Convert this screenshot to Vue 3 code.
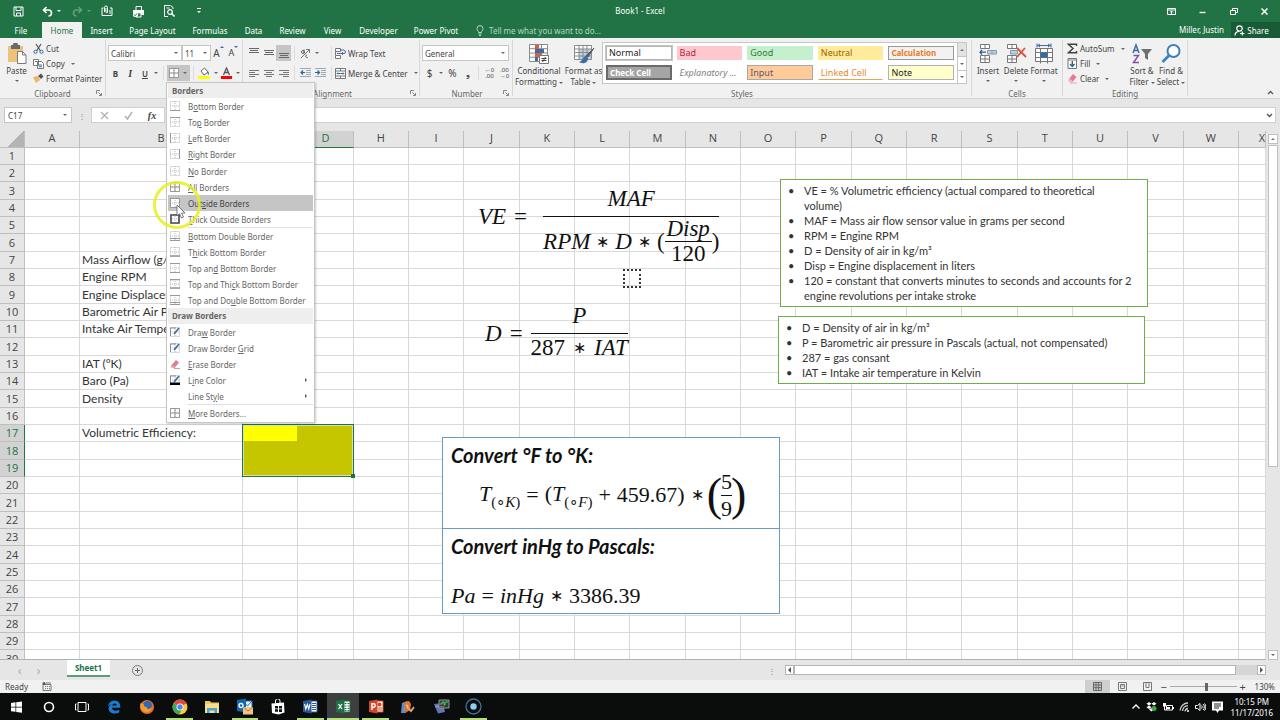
<template>
  <div class="screen">
    <header class="titlebar">
      <div class="quick">
        <button aria-label="Save">
          <svg width="11" height="11" viewBox="0 0 11 11"><path d="M1 1h9v9H1zM3 1v3.500h5V1M3.500 10V7h4v3" fill="none" stroke="#fff" /></svg>
        </button>
        <button aria-label="Undo">
          <svg width="11" height="11" viewBox="0 0 11 11"><path d="M1.500 4h5a3 3 0 0 1 0 6M4.500 1l-3 3 3 3" fill="none" stroke="#fff" stroke-width="1.600" /></svg>
          <i class="caret light"></i>
        </button>
        <button aria-label="Redo" class="faded">
          <svg width="11" height="11" viewBox="0 0 11 11"><path d="M9.500 4h-5a3 3 0 0 0 0 6M6.500 1l3 3-3 3" fill="none" stroke="#fff" stroke-width="1.600" /></svg>
          <i class="caret light"></i>
        </button>
        <button aria-label="Attach">
          <svg width="12" height="12" viewBox="0 0 12 12"><path d="M1 3v7.500h10V3H9M1 3h1.500M3.500 7V2.500a1.500 1.500 0 0 1 3 0V7a.8.8 0 0 1-1.600 0V3M8 6h2M8 8h2" fill="none" stroke="#fff" /></svg>
        </button>
        <button aria-label="Quick Print">
          <svg width="13" height="13" viewBox="0 0 13 13"><path d="M1 5h11v5H1z" fill="#fff" /><path d="M4 5V1.500h5.500V5M4 8h5v4H4z" fill="#217346" stroke="#fff" /><circle cx="3.500" cy="9.500" r="2.600" fill="#fff" /><path d="M2 9.500l1.200 1.200L5 8.500" stroke="#217346" fill="none" /></svg>
        </button>
        <button aria-label="Print Preview">
          <svg width="12" height="12" viewBox="0 0 12 12"><path d="M5 11.500H1.500V.5h6l2.500 2V4M3.500 3h3" fill="none" stroke="#fff" /><circle cx="7" cy="7" r="2.300" fill="none" stroke="#fff" stroke-width="1.200" /><path d="M8.500 8.500l3 3" stroke="#fff" stroke-width="1.600" /></svg>
        </button>
        <button aria-label="Customize Quick Access Toolbar">
          <svg width="6" height="6" viewBox="0 0 6 6"><path d="M1 .5h4" stroke="#fff" /><path d="M1 3h4L3 5z" fill="#fff" /></svg>
        </button>
      </div>
      <h1>Book1 - Excel</h1>
      <div class="window">
        <button aria-label="Ribbon Display Options">
          <svg width="9" height="7" viewBox="0 0 9 7"><path d="M.5.5h8v6h-8zM.5 2h8M4.500 6V3M3 4.500L4.500 3 6 4.500" fill="none" stroke="#fff" /></svg>
        </button>
        <button aria-label="Minimize">
          <svg width="7" height="7" viewBox="0 0 7 7"><path d="M.5 4.500h6" stroke="#fff" stroke-width="1.400" /></svg>
        </button>
        <button aria-label="Restore">
          <svg width="8" height="7" viewBox="0 0 8 7"><path d="M.5 2.500h5v4h-5zM2.500 2.500v-2h5v4h-2" fill="none" stroke="#fff" /></svg>
        </button>
        <button aria-label="Close">
          <svg width="7" height="7" viewBox="0 0 7 7"><path d="M.5.5l6 6M6.500.5l-6 6" stroke="#fff" stroke-width="1.500" /></svg>
        </button>
      </div>
    </header>

    <nav class="tabs">
      <div class="tab-list">
        <button v-for="tab in tabs" :key="tab" :class="{ active: tab === activeTab }" @click="activeTab = tab">{{ tab }}</button>
      </div>
      <label class="tell">
        <svg width="8" height="11" viewBox="0 0 8 11"><path d="M2.500 7.500C2.500 6 1 5.500 1 3.600a3 3 0 0 1 6 0C7 5.500 5.500 6 5.500 7.500zM2.500 9h3M3 10.500h2" fill="none" stroke="#b5d3c2" /></svg>
        <input type="text" placeholder="Tell me what you want to do..." />
      </label>
      <span class="user">Miller, Justin</span>
      <button class="share">
        <svg width="11" height="11" viewBox="0 0 11 11"><circle cx="5.500" cy="3.500" r="2.700" fill="none" stroke="#fff" stroke-width="1.200" /><path d="M1 10.500c0-2.500 1.800-4 4-4M6 8.500h4.500M8.300 6.500v4" fill="none" stroke="#fff" stroke-width="1.200" /></svg>
        Share
      </button>
    </nav>

    <section class="ribbon">
      <div class="group clipboard">
        <div class="body">
          <button class="big">
            <svg width="22" height="22" viewBox="0 0 22 22"><path d="M2 3h15v16H2z" fill="#ecc37a" /><path d="M5 2h2a2.500 2.500 0 0 1 5 0h2v4H5z" fill="#6a6a6a" /><path d="M11.500 8.500h5l3.500 3.500v8.500h-8.500z" fill="#fff" stroke="#7a7a7a" /><path d="M16.500 8.500V12H20" fill="none" stroke="#7a7a7a" /></svg>
            <span>Paste</span>
            <i class="caret"></i>
          </button>
          <div class="stack">
            <button>
              <svg width="11" height="11" viewBox="0 0 11 11"><path d="M3 1l4.500 7M8 1L3.500 8" stroke="#555" stroke-width="1.200" /><circle cx="2.500" cy="8.800" r="1.600" fill="none" stroke="#3b6ea5" /><circle cx="8.500" cy="8.800" r="1.600" fill="none" stroke="#3b6ea5" /></svg>
              Cut
            </button>
            <button>
              <svg width="11" height="11" viewBox="0 0 11 11"><path d="M.5 1.500h5v6h-5zM4.500 3.500h4l2 2v5h-6z" fill="#fff" stroke="#777" /><path d="M6 7h3M6 8.700h3M2 3.500h2" stroke="#3b6ea5" /></svg>
              Copy <i class="caret"></i>
            </button>
            <button>
              <svg width="11" height="11" viewBox="0 0 11 11"><path d="M0 4l5-1 2 4-4 3z" fill="#ecb763" /><path d="M5 3l3-2.500 2.500 3L8 6z" fill="#555" /></svg>
              Format Painter
            </button>
          </div>
        </div>
        <footer>Clipboard<LaunchIcon /></footer>
      </div>

      <div class="group font">
        <div class="body rows">
          <div class="row">
            <span class="combo name-combo"><select aria-label="Font"><option>Calibri</option></select><i class="caret"></i></span>
            <span class="combo size-combo"><select aria-label="Font Size"><option>11</option></select><i class="caret"></i></span>
            <button class="tool letter" aria-label="Increase Font Size">A<svg width="4" height="4" viewBox="0 0 4 4"><path d="M0 3l2-2 2 2z" fill="#3b6ea5" /></svg></button>
            <button class="tool letter small" aria-label="Decrease Font Size">A<svg width="4" height="4" viewBox="0 0 4 4"><path d="M0 1l2 2 2-2z" fill="#3b6ea5" /></svg></button>
          </div>
          <div class="row">
            <button class="tool bold">B</button>
            <button class="tool italic">I</button>
            <button class="tool under">U</button>
            <button class="tool narrow" aria-label="Underline options"><i class="caret"></i></button>
            <i class="rule"></i>
            <button class="tool split pressed" aria-label="Borders">
              <BorderIcon kind="all" /><i class="caret"></i>
            </button>
            <i class="rule"></i>
            <button class="tool split" aria-label="Fill Color">
              <svg width="12" height="12" viewBox="0 0 12 12"><path d="M3 4l3.500-3L10 5 6 8z" fill="#fff" stroke="#666" /><path d="M9.500 4c2 1 1.500 3 1 4-1-1-1-2-1-4z" fill="#3b6ea5" /><path d="M0 9h12v3H0z" fill="#ff0" /></svg>
              <i class="caret"></i>
            </button>
            <button class="tool split" aria-label="Font Color">
              <svg width="11" height="12" viewBox="0 0 11 12"><path d="M2.500 8l3-7 3 7M3.500 5.500h4" fill="none" stroke="#555" stroke-width="1.300" /><path d="M0 9h11v3H0z" fill="#f00" /></svg>
              <i class="caret"></i>
            </button>
          </div>
        </div>
        <footer>Font<LaunchIcon /></footer>
      </div>

      <div class="group align">
        <div class="body rows">
          <div class="row">
            <button v-for="n in 3" :key="n" class="tool" :class="{ pressed: n === 3 }" :aria-label="vertical[n - 1]">
              <svg width="10" height="12" viewBox="0 0 10 12"><path :d="verticalLines(n)" stroke="#666" /></svg>
            </button>
            <i class="rule"></i>
            <button class="tool split" aria-label="Orientation">
              <svg width="11" height="11" viewBox="0 0 11 11"><path d="M1 10l8-8M6 1.500h3.500V5" fill="none" stroke="#777" /><circle cx="3" cy="4" r="1.500" fill="none" stroke="#666" /><path d="M4 1.500v4M7 7a1.300 1.300 0 1 0 1 2" fill="none" stroke="#666" /></svg>
              <i class="caret"></i>
            </button>
            <i class="rule wide"></i>
            <button class="text-tool">
              <svg width="11" height="11" viewBox="0 0 11 11"><path d="M.5.5h5v3h-5zM.5 7.500h5v3h-5zM.5 3.500v4" fill="#fff" stroke="#777" /><path d="M5 2h4M2 5.500h7a1 1 0 0 0 0-3M8 4L6.500 5.500 8 7" fill="none" stroke="#3b6ea5" /></svg>
              Wrap Text
            </button>
          </div>
          <div class="row">
            <button v-for="n in 3" :key="n" class="tool" :aria-label="horizontal[n - 1]">
              <svg width="10" height="9" viewBox="0 0 10 9"><path :d="horizontalLines(n)" stroke="#777" /></svg>
            </button>
            <i class="rule"></i>
            <button class="tool" aria-label="Decrease Indent">
              <svg width="11" height="10" viewBox="0 0 11 10"><path d="M0 .5h11M6 2.500h5M6 4.500h5M6 6.500h5M0 8.500h11" stroke="#9aa9b8" /><path d="M5 4.500H1M3 2.500l-2 2 2 2" fill="none" stroke="#2a6399" stroke-width="1.200" /></svg>
            </button>
            <button class="tool" aria-label="Increase Indent">
              <svg width="11" height="10" viewBox="0 0 11 10"><path d="M0 .5h11M6 2.500h5M6 4.500h5M6 6.500h5M0 8.500h11" stroke="#9aa9b8" /><path d="M0 4.500h4M2.500 2.500l2 2-2 2" fill="none" stroke="#2a6399" stroke-width="1.200" /></svg>
            </button>
            <i class="rule"></i>
            <button class="text-tool">
              <svg width="11" height="11" viewBox="0 0 11 11"><path d="M.5.5h10v10H.5zM.5 3h10M.5 8h10M5.500.5V3M5.500 8v2.500" fill="#fff" stroke="#777" /><path d="M2 5.500h7M3 4.500l-1 1 1 1M8 4.500l1 1-1 1" fill="none" stroke="#3b6ea5" /></svg>
              Merge &amp; Center <i class="caret"></i>
            </button>
          </div>
        </div>
        <footer>Alignment<LaunchIcon /></footer>
      </div>

      <div class="group number">
        <div class="body rows">
          <div class="row">
            <span class="combo format-combo"><select aria-label="Number Format"><option>General</option></select><i class="caret"></i></span>
          </div>
          <div class="row">
            <button class="tool sign">$</button>
            <button class="tool narrow" aria-label="Currency options"><i class="caret"></i></button>
            <button class="tool sign">%</button>
            <button class="tool sign">❟</button>
            <i class="rule"></i>
            <button class="tool decimals" aria-label="Increase Decimal"><span>←0<br />.00</span></button>
            <button class="tool decimals" aria-label="Decrease Decimal"><span>.00<br />→0</span></button>
          </div>
        </div>
        <footer>Number<LaunchIcon /></footer>
      </div>

      <div class="group styles">
        <div class="body">
          <button class="big cond">
            <svg width="22" height="22" viewBox="0 0 22 22"><path d="M1.500 1.500h18v17h-18z" fill="#fff" stroke="#8a8a8a" /><path d="M1.500 5.700h18M1.500 10h18M1.500 14.200h18M7.500 1.500v17M13.500 1.500v17" stroke="#8a8a8a" /><path d="M7 2h4v4H7zM7 10h7v4H7z" fill="#d65f45" /><path d="M7 6h9v4H7zM7 14h3v4H7z" fill="#3b6ea5" /><path d="M11.500 12.500h9v8h-9z" fill="#fff" stroke="#777" /><path d="M13.500 15.500h5M13.500 17.500h5M17.500 14l-3 5" stroke="#444" /></svg>
            <span>Conditional<br />Formatting <i class="caret"></i></span>
          </button>
          <button class="big table">
            <svg width="22" height="22" viewBox="0 0 22 22"><path d="M1.500 2.500h17v14h-17z" fill="#fff" stroke="#8a8a8a" /><path d="M6 6h12v10H6z" fill="#b9d3ea" /><path d="M1.500 6h17M1.500 9.500h17M1.500 13h17M6 2.500v14M10 2.500v14M14 2.500v14" stroke="#8a8a8a" /><path d="M21 5l-6 9-2-1z" fill="#5a5a5a" stroke="#5a5a5a" /><path d="M13 13c-3 0-3 5-7 6 3 2 9 2 9-4z" fill="#3b6ea5" /></svg>
            <span>Format as<br />Table <i class="caret"></i></span>
          </button>
          <div class="gallery">
            <button v-for="s in cellStyles" :key="s.name" :class="s.kind">{{ s.name }}</button>
          </div>
          <div class="gallery-nav">
            <button aria-label="Previous styles" disabled><i class="caret up"></i></button>
            <button aria-label="Next styles"><i class="caret"></i></button>
            <button aria-label="More styles"><i class="caret more"></i></button>
          </div>
        </div>
        <footer>Styles</footer>
      </div>

      <div class="group cells">
        <div class="body">
          <button class="big">
            <svg width="20" height="22" viewBox="0 0 20 22"><path d="M2.500 1.500h9v4h-9zM7 1.500v4M2.500 12.500h9v7h-9zM7 12.500v7M2.500 16h9" fill="#fff" stroke="#777" /><path d="M9.500 7.500h9v3.500h-9zM14 7.500V11" fill="#b9cfe6" stroke="#8899aa" /><path d="M8 9.200H2M4 7L2 9.200l2 2.300" fill="none" stroke="#2a6399" stroke-width="1.300" /></svg>
            <span>Insert</span><i class="caret"></i>
          </button>
          <button class="big">
            <svg width="22" height="22" viewBox="0 0 22 22"><path d="M2.500 1.500h9v4h-9zM7 1.500v4M2.500 12.500h9v7h-9zM7 12.500v7M2.500 16h9" fill="#fff" stroke="#777" /><path d="M5.500 7.500h7v3.500h-7z" fill="#b9cfe6" stroke="#8899aa" /><path d="M12 5l9 9M20 5l-8 9" stroke="#d4553a" stroke-width="1.800" /></svg>
            <span>Delete</span><i class="caret"></i>
          </button>
          <button class="big">
            <svg width="20" height="22" viewBox="0 0 20 22"><path d="M1.500 5.500h17v13h-17zM1.500 9.500h17M1.500 14.500h17M6.500 5.500v15M13.500 5.500v15" fill="#fff" stroke="#777" /><path d="M6.500 9.500h7v5h-7z" fill="#2f6ca8" /><path d="M3 2.500h14M3 .5v4M17 .5v4M6 1L4 2.500 6 4M14 1l2 1.500L14 4" fill="none" stroke="#3b6ea5" /></svg>
            <span>Format</span><i class="caret"></i>
          </button>
        </div>
        <footer>Cells</footer>
      </div>

      <div class="group editing">
        <div class="body">
          <div class="stack">
            <button>
              <svg width="11" height="11" viewBox="0 0 11 11"><path d="M9.500 3V1.300H1.500L6 5.500 1.500 9.700h8V8" fill="none" stroke="#444" stroke-width="1.500" /></svg>
              AutoSum <i class="caret"></i>
            </button>
            <button>
              <svg width="11" height="11" viewBox="0 0 11 11"><path d="M1 .5h8.500v10H1zM1 2h8.500" fill="#fff" stroke="#777" /><path d="M5.300 3v5.500M3 6l2.300 2.500L7.600 6" fill="none" stroke="#2a6399" stroke-width="1.400" /></svg>
              Fill <i class="caret"></i>
            </button>
            <button>
              <svg width="11" height="11" viewBox="0 0 11 11"><path d="M2 6l4-5 3.500 3-4 5z" fill="#e8798e" /><path d="M1 7l1.500-1.500L6 8.500 5 9.500H2.500z" fill="#f5b9c4" /><path d="M3 10h7" stroke="#bbb" /></svg>
              Clear <i class="caret"></i>
            </button>
          </div>
          <button class="big sort">
            <svg width="22" height="22" viewBox="0 0 22 22"><path d="M2 10l3-8 3 8M3 7.500h4" fill="none" stroke="#3b6ea5" stroke-width="1.500" /><path d="M2.500 12.500h5l-5 7h5.500" fill="none" stroke="#8b4fa3" stroke-width="1.500" /><path d="M10 6h11l-4 5v6l-3-2v-4z" fill="#707070" /></svg>
            <span>Sort &amp;<br />Filter <i class="caret"></i></span>
          </button>
          <button class="big">
            <svg width="22" height="22" viewBox="0 0 22 22"><circle cx="13.500" cy="8" r="6" fill="#fff" stroke="#3b7fc0" stroke-width="2" /><path d="M9 12.500L2.500 19" stroke="#3b7fc0" stroke-width="2.600" /></svg>
            <span>Find &amp;<br />Select <i class="caret"></i></span>
          </button>
        </div>
        <footer>Editing</footer>
      </div>

      <button class="collapse" aria-label="Collapse the Ribbon">
        <svg width="7" height="5" viewBox="0 0 7 5"><path d="M1 4l2.500-2.500L6 4" fill="none" stroke="#555" stroke-width="1.300" /></svg>
      </button>
    </section>

    <section class="formula-bar">
      <span class="combo name-box"><input v-model="cellName" type="text" aria-label="Name Box" /><i class="caret"></i></span>
      <span class="dots">⋮</span>
      <div class="formula-tools">
        <button aria-label="Cancel"><svg width="9" height="9" viewBox="0 0 9 9"><path d="M1 1l7 7M8 1L1 8" stroke="#b0b0b0" stroke-width="1.200" /></svg></button>
        <button aria-label="Enter"><svg width="9" height="9" viewBox="0 0 9 9"><path d="M1 5l2.500 3L8 1" fill="none" stroke="#b0b0b0" stroke-width="1.500" /></svg></button>
        <button class="fx">fx</button>
      </div>
      <span class="formula"><input v-model="formula" type="text" aria-label="Formula" /><svg width="7" height="5" viewBox="0 0 7 5"><path d="M1 1l2.500 2.500L6 1" fill="none" stroke="#555" stroke-width="1.400" /></svg></span>
    </section>

    <main class="workbook">
      <div class="sheet">
        <table>
          <colgroup>
            <col class="col-head" /><col class="col-a" /><col class="col-b" />
            <col v-for="n in 18" :key="n" /><col class="col-last" />
          </colgroup>
          <thead>
            <tr>
              <th class="corner"></th>
              <th v-for="c in columns" :key="c" :class="{ picked: c === 'C' || c === 'D', last: c === 'X' }">{{ c }}</th>
            </tr>
          </thead>
          <tbody>
            <tr v-for="r in 30" :key="r">
              <th :class="{ picked: isPickedRow(r) }">{{ r }}</th>
              <td v-for="c in columns" :key="c" :class="cellClass(r, c)">{{ c === 'B' ? labels[r] : '' }}</td>
            </tr>
          </tbody>
        </table>
        <div class="selection"></div>

        <div class="equation ve">
          <span class="lead"><em>VE</em><span>=</span></span>
          <span class="fraction">
            <em>MAF</em>
            <span class="below">
              <em>RPM</em><b>∗</b><em>D</em><b>∗</b>
              <span>(</span>
              <span class="fraction inner"><em>Disp</em><span>120</span></span>
              <span>)</span>
            </span>
          </span>
        </div>
        <div class="placeholder"></div>
        <div class="equation density">
          <span class="lead"><em>D</em><span>=</span></span>
          <span class="fraction">
            <em>P</em>
            <span class="below"><span>287</span><b>∗</b><em>IAT</em></span>
          </span>
        </div>

        <ul class="notes notes-ve">
          <li>VE = % Volumetric efficiency (actual compared to theoretical<br />volume)</li>
          <li>MAF = Mass air flow sensor value in grams per second</li>
          <li>RPM = Engine RPM</li>
          <li>D = Density of air in kg/m³</li>
          <li>Disp = Engine displacement in liters</li>
          <li>120 = constant that converts minutes to seconds and accounts for 2<br />engine revolutions per intake stroke</li>
        </ul>
        <ul class="notes notes-density">
          <li>D = Density of air in kg/m³</li>
          <li>P = Barometric air pressure in Pascals (actual, not compensated)</li>
          <li>287 = gas consant</li>
          <li>IAT = Intake air temperature in Kelvin</li>
        </ul>

        <div class="convert">
          <section class="kelvin">
            <h2>Convert °F to °K:</h2>
            <div class="formula-line">
              <span><em>T</em><sub>(∘<em>K</em>)</sub></span><span>=</span>
              <span>(<em>T</em><sub>(∘<em>F</em>)</sub></span><span>+</span><span>459.67)</span><b>∗</b>
              <span class="nine"><i>(</i><span class="fraction"><span>5</span><span>9</span></span><i>)</i></span>
            </div>
          </section>
          <section class="pascal">
            <h2>Convert inHg to Pascals:</h2>
            <div class="formula-line"><em>Pa</em><span>=</span><em>inHg</em><b>∗</b><span>3386.39</span></div>
          </section>
        </div>
      </div>
      <div class="vscroll">
        <button aria-label="Scroll up"><i class="caret up"></i></button>
        <div class="thumb"></div>
        <button aria-label="Scroll down"><i class="caret"></i></button>
      </div>
    </main>

    <div class="sheet-tabs">
      <button class="arrow" aria-label="Previous sheet">‹</button>
      <button class="arrow" aria-label="Next sheet">›</button>
      <button class="sheet-tab">Sheet1</button>
      <button class="add" aria-label="New sheet">
        <svg width="11" height="11" viewBox="0 0 11 11"><circle cx="5.500" cy="5.500" r="5" fill="none" stroke="#777" /><path d="M5.500 3v5M3 5.500h5" stroke="#666" /></svg>
      </button>
      <span class="dots">⋮</span>
      <div class="hscroll">
        <button aria-label="Scroll left"><i class="caret left"></i></button>
        <div class="thumb"></div>
        <button aria-label="Scroll right"><i class="caret right"></i></button>
      </div>
    </div>

    <div class="status">
      <span>Ready</span>
      <svg width="10" height="9" viewBox="0 0 10 9"><path d="M1 2.500h8v6H1zM3 4.500h1M5 4.500h1M7 4.500h1M3 6.500h1M5 6.500h1M7 6.500h1" fill="none" stroke="#777" /><circle cx="2" cy="1.500" r="1.500" fill="#555" /><path d="M4 1h5" stroke="#777" /></svg>
      <div class="views">
        <button class="on" aria-label="Normal"><svg width="9" height="9" viewBox="0 0 9 9"><path d="M.5.5h8v8h-8zM.5 3h8M.5 5.700h8M3 .5v8M5.700.5v8" fill="none" stroke="#666" /></svg></button>
        <button aria-label="Page Layout"><svg width="9" height="9" viewBox="0 0 9 9"><path d="M.5.5h8v8h-8zM2.500 2.500h4v4h-4zM3.500 4h2" fill="none" stroke="#777" /></svg></button>
        <button aria-label="Page Break Preview"><svg width="9" height="9" viewBox="0 0 9 9"><path d="M.5.5h8v8h-8zM3 .5V5.500h3V.5" fill="none" stroke="#777" /></svg></button>
      </div>
      <div class="zoom">
        <button>−</button>
        <input v-model="zoom" type="range" min="70" max="180" aria-label="Zoom" />
        <button>+</button>
        <span>{{ zoom }}%</span>
      </div>
    </div>

    <div class="taskbar">
      <div class="apps">
        <button aria-label="Start"><svg width="13" height="12" viewBox="0 0 13 12"><path d="M1 2l4.500-.7v4.400H1zM6.200 1.200L12 .4v5.300H6.200zM1 6.400h4.500v4.400L1 10.200zM6.200 6.400H12v5.300l-5.800-.8z" fill="#fff" /></svg></button>
        <button aria-label="Cortana"><svg width="12" height="12" viewBox="0 0 12 12"><circle cx="6" cy="6" r="4.500" fill="none" stroke="#fff" stroke-width="1.600" /></svg></button>
        <button aria-label="Task View"><svg width="14" height="12" viewBox="0 0 14 12"><path d="M3 1.500h8v9H3zM1.500 3H.5v6h1M12.500 3h1v6h-1" fill="none" stroke="#fff" /></svg></button>
        <button aria-label="Edge"><svg width="14" height="14" viewBox="0 0 14 14"><path d="M1 6.500C1.500 3 4 .5 7.500.5c4 0 6 3 5.800 7.300H5c.3 3 4 3.700 7.200 1.900v2.800C7 15 1.500 13 1.600 8.500c0-2 1.500-3.700 3.400-4.500-2 .5-3.200 1.500-4 2.500zM5.200 5.600h4.600C9.800 2.800 5.800 2.700 5.200 5.600z" fill="#1a7bd0" /></svg></button>
        <button aria-label="Firefox"><svg width="16" height="16" viewBox="0 0 16 16"><circle cx="8" cy="8" r="7" fill="#e8702a" /><circle cx="8.500" cy="6.500" r="4.500" fill="#2f68b5" /><path d="M1.500 4C3 5 3 5 5 5c-1 2 1 3 3 3-1 3 3 2 5 .5-1 4-4 5.500-7 4.500C2 12 .5 8 1.500 4z" fill="#f39a2e" /></svg></button>
        <button class="running" aria-label="Chrome"><svg width="16" height="16" viewBox="0 0 16 16"><circle cx="8" cy="8" r="7.500" fill="#fccb32" /><path d="M8 8L1.500 4.300a7.500 7.500 0 0 1 13-.1z" fill="#e2493b" /><path d="M8 8L1.500 4.300A7.500 7.500 0 0 0 7 15.400l3.500-6z" fill="#3ba757" /><path d="M8 4h6.500" stroke="#e2493b" stroke-width="1" /><circle cx="8" cy="8" r="3.500" fill="#fff" /><circle cx="8" cy="8" r="2.700" fill="#4a8af4" /></svg></button>
        <button aria-label="File Explorer"><svg width="16" height="14" viewBox="0 0 16 14"><path d="M1 1h5l1 1.500h8V13H1z" fill="#f0c95c" /><path d="M1 4h14v9H1z" fill="#f9df8b" /><path d="M3 13V8h10v5h-2.500v-2.500h-5V13z" fill="#46a6da" /></svg></button>
        <button class="running" aria-label="Outlook"><svg width="18" height="17" viewBox="0 0 18 17"><path d="M7 3h9v9H7z" fill="#e9f2fa" stroke="#1a6fba" /><path d="M7 3l4.500 5L16 3" fill="none" stroke="#1a6fba" /><path d="M1 2l9-1.500v14L1 13z" fill="#0f66b5" /><circle cx="5" cy="7.500" r="2" fill="none" stroke="#fff" stroke-width="1.300" /><path d="M7 9h10v7.500H7z" fill="#f2c48a" /><path d="M7 9l5 4 5-4" fill="none" stroke="#b97c33" /></svg></button>
        <button aria-label="Store"><svg width="16" height="16" viewBox="0 0 16 16"><path d="M1.500 4.500l12.500-1 .5 10-6 2-6.500-1.500z" fill="#fff" /><path d="M5.500 4V2a2 2 0 0 1 4.500 0v2" fill="none" stroke="#fff" /><path d="M5 7h3v2.500H5zM9 7h3v2.500H9zM5 10.300h3v2.500H5zM9 10.300h3v2.700H9z" fill="#111" /></svg></button>
        <button class="running" aria-label="Word"><svg width="16" height="15" viewBox="0 0 16 15"><path d="M8 2h7v11H8z" fill="#fff" stroke="#2b579a" /><path d="M10 4.500h4M10 6.500h4M10 8.500h4M10 10.500h4" stroke="#2b579a" /><path d="M1 2l8.500-1.500v14L1 13z" fill="#2b579a" /><path d="M2.500 5l1.300 5L5.300 5.500 6.800 10 8 5" fill="none" stroke="#fff" stroke-width="1.100" /></svg></button>
        <button class="running current" aria-label="Excel"><svg width="16" height="15" viewBox="0 0 16 15"><path d="M8 2h7v11H8z" fill="#fff" stroke="#217346" /><path d="M9.500 4.500h2M12.500 4.500h2M9.500 7h2M12.500 7h2M9.500 9.500h2M12.500 9.500h2M9.500 11.500h2M12.500 11.500h2" stroke="#217346" /><path d="M1 2l8.500-1.500v14L1 13z" fill="#1d7044" /><path d="M3.500 5l3.500 5M7 5l-3.500 5" stroke="#fff" stroke-width="1.300" /></svg></button>
        <button class="running" aria-label="PowerPoint"><svg width="16" height="15" viewBox="0 0 16 15"><path d="M8 2h7v11H8z" fill="#fff" stroke="#d24726" /><circle cx="11.500" cy="5.500" r="2" fill="#d24726" /><path d="M10 9h4M10 11h4" stroke="#d24726" /><path d="M1 2l8.500-1.500v14L1 13z" fill="#d24726" /><path d="M4 11V4.700h1.500a1.600 1.600 0 0 1 0 3.500H4" fill="none" stroke="#fff" stroke-width="1.400" /></svg></button>
        <button aria-label="Tuner"><svg width="16" height="14" viewBox="0 0 16 14"><path d="M2 3l5-2 2 3-3 9H1z" fill="#5b8fc9" /><path d="M5 2l4-1 2 3-1 6-3 2-3-2z" fill="#e8742c" /><path d="M8 8l3 3 3-4" fill="none" stroke="#dca368" stroke-width="2" /><path d="M6 5l2 1-1 2" fill="none" stroke="#ffd9b0" /></svg></button>
        <button aria-label="Scanner"><svg width="17" height="15" viewBox="0 0 17 15"><path d="M1 5l9-1 2 9-7 1.500z" fill="#6076b8" /><path d="M2 8l8-2" stroke="#94a5d8" /><path d="M6 1h10v8H6z" fill="#2d3b3a" stroke="#8e9c9c" /><path d="M7 5h2V3h2v3h1V3h3" fill="none" stroke="#4ad165" /><path d="M7 7.500h4" stroke="#e0493a" /></svg></button>
        <button class="running" aria-label="Recorder"><svg width="17" height="17" viewBox="0 0 17 17"><circle cx="8.500" cy="8.500" r="7.500" fill="none" stroke="#3d7396" stroke-width="1.300" /><circle cx="8.500" cy="8.500" r="3.200" fill="#8fcdf2" /></svg></button>
      </div>
      <div class="tray">
        <svg width="10" height="7" viewBox="0 0 10 7"><path d="M1.500 5.500L5 2l3.500 3.500" fill="none" stroke="#fff" stroke-width="1.300" /></svg>
        <svg width="11" height="11" viewBox="0 0 11 11"><path d="M3 1l2.500 1.700L3 4.500.5 2.700zM8 1l2.500 1.700L8 4.500 5.500 2.700zM3 4.500l2.500 1.700L3 8 .5 6.200zM5.500 7L8 8.500l-2.500 2-2.500-2z" fill="#fff" /><circle cx="8" cy="7.500" r="2.500" fill="#3ea64b" /></svg>
        <svg width="12" height="10" viewBox="0 0 12 10"><path d="M4.500 3.500h6v4.500h-6z" fill="none" stroke="#fff" /><path d="M5 5h3v2H5zM11 5h1v2h-1zM1 1h3v3.500H1z" fill="#fff" /><path d="M2.500 4v4h2" fill="none" stroke="#fff" /></svg>
        <svg width="11" height="10" viewBox="0 0 11 10"><path d="M1 8.500A8 8 0 0 1 9 1M3.500 9A6 6 0 0 1 9 3.700M6 9.300a3.500 3.500 0 0 1 3-2.800" fill="none" stroke="#ccc" stroke-width="1.300" /><circle cx="9" cy="9" r="1" fill="#fff" /></svg>
        <svg width="11" height="10" viewBox="0 0 11 10"><path d="M.5 3.500h2l2.500-2v7l-2.500-2h-2zM6.500 3.500a2 2 0 0 1 0 3M8 2a4 4 0 0 1 0 6M9.500 1.500a5 5 0 0 1 0 7" fill="none" stroke="#fff" /></svg>
        <svg width="13" height="12" viewBox="0 0 13 12"><path d="M1 .5h11v9H8L6.500 12 5 9.500H1z" fill="#fff" /><path d="M3 3h7M3 5h7M3 7h5" stroke="#222" /></svg>
        <time>10:15 PM<br />11/17/2016</time>
      </div>
    </div>

    <div class="menu" role="menu">
      <template v-for="(item, i) in menu" :key="i">
        <h3 v-if="item.title">{{ item.title }}</h3>
        <hr v-else-if="item.line" />
        <button v-else role="menuitem" :class="{ hover: item.icon === 'outside' }">
          <span class="menu-icon"><BorderIcon v-if="item.icon" :kind="item.icon" /></span>
          <span>{{ item.parts[0] }}<u>{{ item.parts[1] }}</u>{{ item.parts[2] }}</span>
          <i v-if="item.sub" class="caret right"></i>
        </button>
      </template>
    </div>

    <svg class="pointer" width="50" height="50" viewBox="0 0 50 50">
      <circle cx="25" cy="25" r="22.500" fill="none" stroke="#e8ee22" stroke-opacity=".85" stroke-width="3" />
      <path d="M25 25v11l2.500-2.300 2 4.300 2-1-2-4h3.500z" fill="#fff" stroke="#555" stroke-width=".8" />
    </svg>
  </div>
</template>

<script setup>
import { ref, h } from 'vue'

const tabs = ['File', 'Home', 'Insert', 'Page Layout', 'Formulas', 'Data', 'Review', 'View', 'Developer', 'Power Pivot']
const activeTab = ref('Home')
const cellName = ref('C17')
const formula = ref('')
const zoom = ref(130)

const vertical = ['Top Align', 'Middle Align', 'Bottom Align']
const horizontal = ['Align Left', 'Center', 'Align Right']

// E, F and G are hidden in this sheet
const columns = 'ABCDHIJKLMNOPQRSTUVWX'.split('')

const labels = {
  7: 'Mass Airflow (g/s)',
  8: 'Engine RPM',
  9: 'Engine Displacement (L)',
  10: 'Barometric Air Pressure',
  11: 'Intake Air Temperature',
  13: 'IAT (°K)',
  14: 'Baro (Pa)',
  15: 'Density',
  17: 'Volumetric Efficiency:'
}

const cellStyles = [
  { name: 'Normal', kind: 'normal' },
  { name: 'Bad', kind: 'bad' },
  { name: 'Good', kind: 'good' },
  { name: 'Neutral', kind: 'neutral' },
  { name: 'Calculation', kind: 'calc' },
  { name: 'Check Cell', kind: 'check' },
  { name: 'Explanatory ...', kind: 'explain' },
  { name: 'Input', kind: 'input' },
  { name: 'Linked Cell', kind: 'linked' },
  { name: 'Note', kind: 'note' }
]

// "&" marks the access key that follows it
function entry(text, icon, sub = false) {
  const at = text.indexOf('&')
  return { parts: [text.slice(0, at), text[at + 1], text.slice(at + 2)], icon, sub }
}

const menu = [
  { title: 'Borders' },
  entry('B&ottom Border', 'bottom'),
  entry('To&p Border', 'top'),
  entry('&Left Border', 'left'),
  entry('&Right Border', 'right'),
  { line: true },
  entry('&No Border', 'none'),
  entry('&All Borders', 'all'),
  entry('Out&side Borders', 'outside'),
  entry('&Thick Outside Borders', 'thick'),
  { line: true },
  entry('&Bottom Double Border', 'double'),
  entry('T&hick Bottom Border', 'thickbottom'),
  entry('Top an&d Bottom Border', 'topbottom'),
  entry('Top and Thi&ck Bottom Border', 'topthick'),
  entry('Top and Do&uble Bottom Border', 'topdouble'),
  { title: 'Draw Borders' },
  entry('Dra&w Border', 'draw'),
  entry('Draw Border &Grid', 'drawgrid'),
  entry('&Erase Border', 'erase'),
  entry('L&ine Color', 'color', true),
  entry('Line St&yle', '', true),
  { line: true },
  entry('&More Borders...', 'all')
]

const strokes = {
  bottom: 'M0 9.500h10',
  top: 'M0 .5h10',
  left: 'M.5 0v10',
  right: 'M9.500 0v10',
  all: 'M.5.5h9v9h-9zM5 0v10M0 5h10',
  outside: 'M.5.5h9v9h-9z',
  thick: 'M1 1h8v8H1z',
  double: 'M0 7.500h10M0 9.500h10',
  thickbottom: 'M0 9h10',
  topbottom: 'M0 .5h10M0 9.500h10',
  topthick: 'M0 .5h10M0 9h10',
  topdouble: 'M0 .5h10M0 7.500h10M0 9.500h10'
}

function BorderIcon({ kind }) {
  const shapes = []
  if (kind === 'erase') {
    shapes.push(h('path', { d: 'M1.500 6L6 1l3 2.500L5 8.500z', fill: '#e8798e' }))
    shapes.push(h('path', { d: 'M1 8l1-2 3 2.500zM4 9.500h6', fill: '#f5b9c4', stroke: '#c9a5ab' }))
  } else {
    shapes.push(h('path', { d: 'M.5.5h9v9h-9zM5 0v10M0 5h10', fill: '#fff', stroke: '#b5b5b5', 'stroke-dasharray': '1 1' }))
  }
  if (strokes[kind]) {
    const wide = kind.includes('thick')
    shapes.push(h('path', { d: strokes[kind], fill: 'none', stroke: kind === 'thick' ? '#4a4a58' : '#999', 'stroke-width': wide ? 1.6 : 1 }))
  }
  if (kind.startsWith('draw') || kind === 'color') {
    shapes.push(h('path', { d: 'M4 7l5-6', stroke: '#3b6ea5', 'stroke-width': 1.8 }))
    shapes.push(h('path', { d: 'M0 1h6M.5 1v8', fill: 'none', stroke: '#8c8c8c' }))
  }
  if (kind === 'color') shapes.push(h('path', { d: 'M0 7.500h10V10H0z', fill: '#000' }))
  return h('svg', { width: 10, height: 10, viewBox: '0 0 10 10' }, shapes)
}
BorderIcon.props = { kind: String }

function LaunchIcon() {
  return h('svg', { class: 'launch', width: 6, height: 6, viewBox: '0 0 6 6' }, [
    h('path', { d: 'M.5 4V.5H4M2.500 2.500l3 3M5.500 3v2.500H3', fill: 'none', stroke: '#888' })
  ])
}

function verticalLines(n) {
  const top = [1, 3, 6][n - 1]
  return `M0 ${top}.5h10M1 ${top + 2}.5h8M0 ${top + 4}.5h10`
}

function horizontalLines(n) {
  const x = [0, 2, 4][n - 1]
  return `M0 1.5h10M${x} 3.5h6M0 5.5h10M${x} 7.5h6`
}

function isPickedRow(r) {
  return r >= 17 && r <= 19
}

function cellClass(r, c) {
  if (!isPickedRow(r) || (c !== 'C' && c !== 'D')) return ''
  return r === 17 && c === 'C' ? 'fill anchor' : 'fill'
}
</script>

<style>
body {
  margin: 0;
}
</style>

<style scoped>
.screen {
  position: relative;
  display: flex;
  flex-direction: column;
  height: 100vh;
  overflow: hidden;
  background: #e6e6e6;
  color: #444;
  font-family: 'Noto Sans', 'Open Sans', sans-serif;
  font-size: 8px;
  line-height: 11px;
}
button,
input,
select {
  margin: 0;
  padding: 0;
  border: 0;
  background: none;
  color: inherit;
  font: inherit;
  outline: 0;
}
button {
  display: flex;
  align-items: center;
  justify-content: center;
  white-space: nowrap;
}
svg {
  flex: none;
  display: block;
}
.caret {
  flex: none;
  display: inline-block;
  width: 0;
  height: 0;
  border: 2px solid transparent;
  border-top-color: #666;
  border-bottom: 0;
  vertical-align: middle;
}
.caret.light {
  border-top-color: #fff;
}
.caret.up {
  border-top: 0;
  border-bottom: 2px solid #777;
}
.caret.left {
  border: 3px solid transparent;
  border-right-color: #555;
  border-left: 0;
}
.caret.right {
  border: 3px solid transparent;
  border-left-color: #555;
  border-right: 0;
}

/* title bar and tabs */
.titlebar {
  display: grid;
  grid-template-columns: 1fr auto 1fr;
  height: 22px;
  background: #217346;
  color: #fff;
}
.titlebar h1 {
  margin: 0;
  font-size: 8px;
  font-weight: 400;
  line-height: 22px;
}
.quick {
  display: grid;
  grid-template-columns: 36px 30px 30px 22px 40px 22px 38px;
}
.quick button {
  gap: 4px;
}
.faded {
  opacity: 0.3;
}
.window {
  display: grid;
  grid-template-columns: repeat(4, 31px);
  justify-content: end;
}
.tabs {
  display: flex;
  height: 16px;
  background: #217346;
  color: #fff;
}
.tab-list {
  display: grid;
  grid-template-columns: 42px 40px 39px 63px 52px 35px 43px 37px 55px 60px;
}
.tab-list button.active {
  background: #f1f1f1;
  color: #217346;
}
.tell {
  flex: 1;
  display: flex;
  align-items: center;
  gap: 5px;
  padding-left: 10px;
}
.tell input {
  width: 140px;
}
.tell input::placeholder {
  color: #b5d3c2;
  opacity: 1;
}
.user {
  padding-right: 7px;
  line-height: 16px;
}
.share {
  gap: 2px;
  width: 49px;
  padding-right: 8px;
  box-sizing: border-box;
  background: #185c37;
}

/* ribbon */
.ribbon {
  display: flex;
  height: 61px;
  background: #f1f1f1;
  border-bottom: 1px solid #d5d5d5;
  box-sizing: border-box;
}
.group {
  position: relative;
  display: flex;
  flex-direction: column;
  flex: none;
  box-sizing: border-box;
  margin: 2px 0;
  border-right: 1px solid #d8d8d8;
}
.group footer {
  display: flex;
  justify-content: center;
  height: 11px;
  color: #666;
}
.launch {
  position: absolute;
  right: 3px;
  bottom: 0;
}
.body {
  display: flex;
  flex: none;
  height: 48px;
}
.rows {
  flex-direction: column;
  gap: 4px;
  padding-top: 5px;
  box-sizing: border-box;
}
.row {
  display: flex;
  align-items: center;
  height: 16px;
}
.clipboard {
  width: 106px;
}
.font {
  width: 137px;
  padding-left: 2px;
}
.align {
  width: 177px;
  padding-left: 3px;
}
.number {
  width: 93px;
  padding-left: 2px;
}
.styles {
  flex: 1;
}
.cells {
  width: 91px;
}
.editing {
  width: 125px;
}
.collapse {
  align-self: flex-end;
  width: 92px;
  height: 12px;
  padding-left: 72px;
  box-sizing: border-box;
}
.big {
  flex-direction: column;
  justify-content: flex-start;
  width: 33px;
  padding-top: 3px;
}
.big > .caret {
  margin-top: 4px;
}
.cond {
  width: 52px;
}
.table {
  width: 37px;
}
.cells .body {
  padding-left: 2px;
}
.cells .big {
  width: 28px;
}
.sort {
  width: 28px;
}
.editing .big:last-child {
  width: 30px;
}
.stack {
  display: flex;
  flex-direction: column;
  padding-top: 1px;
}
.stack button {
  justify-content: flex-start;
  gap: 2px;
  height: 15px;
}
.editing .stack {
  width: 61px;
  padding-left: 4px;
}
.combo {
  position: relative;
  display: flex;
  align-items: center;
  box-sizing: border-box;
  height: 16px;
  border: 1px solid #c6c6c6;
  background: #fff;
}
.combo select,
.combo input {
  appearance: none;
  width: 100%;
  padding-left: 2px;
}
.combo .caret {
  margin-right: 3px;
}
.name-combo {
  width: 74px;
}
.size-combo {
  width: 29px;
}
.format-combo {
  width: 87px;
}
.tool {
  width: 15px;
  height: 16px;
}
.tool.split {
  width: 23px;
  gap: 4px;
}
.tool.narrow {
  width: 8px;
}
.pressed {
  background: #c5c5c5;
}
.letter {
  align-items: flex-start;
  font-size: 10px;
  line-height: 16px;
}
.letter.small {
  font-size: 9px;
}
.bold {
  font-weight: 700;
}
.italic {
  font-family: 'Liberation Serif', serif;
  font-size: 10px;
  font-style: italic;
  font-weight: 700;
}
.under {
  font-weight: 600;
  text-decoration: underline;
}
.rule {
  width: 1px;
  height: 14px;
  margin: 0 3px;
  background: #dcdcdc;
}
.rule.wide {
  margin-left: 10px;
}
.text-tool {
  gap: 2px;
}
.text-tool .caret,
.stack .caret {
  margin-left: 4px;
}
.sign {
  font-size: 10px;
}
.decimals {
  font-size: 6px;
  line-height: 6px;
}

.gallery {
  flex: 1;
  display: grid;
  grid-template-columns: repeat(5, 1fr);
  gap: 5px;
  height: 42px;
  margin-top: 2px;
  padding: 3px;
  box-sizing: border-box;
  border: 1px solid #c6c6c6;
  background: #fff;
  font-size: 9px;
}
.gallery button {
  justify-content: flex-start;
  min-width: 0;
  padding-left: 2px;
  border: 1px solid transparent;
}
.gallery .normal {
  color: #222;
  border-color: #b5b5b5;
  outline: 1px solid #c6c6c6;
}
.gallery .bad {
  background: #ffc7ce;
  color: #b0283a;
}
.gallery .good {
  background: #c6efce;
  color: #2b7a33;
}
.gallery .neutral {
  background: #ffeb9c;
  color: #9c6500;
}
.gallery .calc {
  background: #f2f2f2;
  border-color: #9a9a9a;
  color: #e87d1e;
  font-size: 8px;
  font-weight: 700;
}
.gallery .check {
  background: #a5a5a5;
  border: 2px solid #6a6a6a;
  color: #fff;
  font-size: 8px;
  font-weight: 700;
}
.gallery .explain {
  color: #7f7f7f;
  font-style: italic;
}
.gallery .input {
  background: #ffcc99;
  border-color: #a8a8a8;
  color: #665572;
}
.gallery .linked {
  border-bottom-color: #e8a653;
  color: #e8862e;
}
.gallery .note {
  background: #ffffcc;
  border-color: #b2b2b2;
  color: #222;
}
.gallery-nav {
  display: grid;
  width: 9px;
  height: 42px;
  margin: 2px 4px 0 0;
  grid-template-rows: repeat(3, 14px);
}
.gallery-nav button {
  border: 1px solid #c6c6c6;
  border-left: 0;
  border-bottom: 0;
  background: #fff;
}
.gallery-nav button:disabled {
  background: #e2e2e2;
}
.gallery-nav button:last-child {
  border-bottom: 1px solid #c6c6c6;
}
.more {
  box-shadow: 0 -3px 0 -1px #777;
}

/* formula bar */
.formula-bar {
  display: flex;
  align-items: center;
  height: 32px;
  padding: 0 4px;
}
.name-box {
  width: 68px;
}
.name-box input {
  padding-left: 3px;
}
.name-box .caret {
  margin-right: 4px;
}
.formula-bar .dots {
  width: 19px;
  text-align: center;
  color: #888;
}
.formula-tools {
  display: flex;
  width: 74px;
  height: 16px;
  box-sizing: border-box;
  border: 1px solid #d0d0d0;
  background: #fff;
}
.formula-tools button {
  flex: 1;
}
.fx {
  font-family: 'Liberation Serif', serif;
  font-size: 10px;
  font-style: italic;
  font-weight: 700;
}
.formula {
  flex: 1;
  display: flex;
  align-items: center;
  height: 16px;
  margin-left: 3px;
  padding-right: 2px;
  box-sizing: border-box;
  border: 1px solid #d0d0d0;
  background: #fff;
}
.formula input {
  flex: 1;
}

/* worksheet */
.workbook {
  flex: 1;
  display: flex;
  min-height: 0;
}
.sheet {
  position: relative;
  flex: 1;
  overflow: hidden;
  background: #fff;
  border-bottom: 1px solid #a8b5ad;
}
table {
  width: 100%;
  table-layout: fixed;
  border-collapse: separate;
  border-spacing: 0;
  font-family: Lato, 'Open Sans', sans-serif;
  font-size: 12px;
  line-height: 16px;
}
.col-head {
  width: 25px;
}
.col-a {
  width: 55px;
}
.col-b {
  width: 163px;
}
.col-last {
  width: 27px;
}
tr {
  height: 17px;
}
tbody tr:nth-child(3n) {
  height: 18px;
}
th,
td {
  padding: 0;
  box-sizing: border-box;
  border-right: 1px solid #d9d9d9;
  border-bottom: 1px solid #d9d9d9;
  white-space: nowrap;
  overflow: hidden;
}
th {
  background: #e6e6e6;
  color: #444;
  font-family: 'Open Sans', sans-serif;
  font-size: 11px;
  font-weight: 400;
  border-color: #bfbfbf;
}
thead th {
  padding-bottom: 2px;
  line-height: 14px;
}
thead th.picked {
  background: #d2d2d2;
  border-bottom: 1px solid #217346;
  color: #217346;
}
tbody th.picked {
  background: #d2d2d2;
  border-right: 1px solid #217346;
  color: #217346;
}
th.last {
  text-align: right;
}
.corner {
  background: linear-gradient(135deg, #e6e6e6 60%, #b4b4b4 60%);
}
td {
  padding-left: 2px;
  color: #333;
}
td.fill {
  background: #c6c600;
  border-color: #c6c600;
}
td.anchor {
  background: #ff0;
}
.selection {
  position: absolute;
  top: 293px;
  left: 242px;
  width: 110px;
  height: 51px;
  border: 1px solid #217346;
  box-shadow: inset 0 0 0 1px #d5e3b0;
}
.selection::after {
  content: '';
  position: absolute;
  right: -2px;
  bottom: -2px;
  width: 4px;
  height: 4px;
  background: #217346;
}

/* equations */
.equation {
  position: absolute;
  display: flex;
  align-items: flex-start;
  color: #111;
  font-family: 'Liberation Serif', serif;
  font-size: 23px;
  line-height: 24px;
  white-space: nowrap;
}
.ve {
  top: 56px;
  left: 478px;
  gap: 16px;
}
.density {
  top: 173px;
  left: 485px;
  gap: 8px;
}
.lead {
  display: flex;
  gap: 8px;
  padding-top: 18px;
}
.fraction {
  display: flex;
  flex-direction: column;
  align-items: center;
}
.fraction > :first-child {
  align-self: stretch;
  text-align: center;
}
.equation > .fraction > :first-child {
  padding-bottom: 5px;
  border-bottom: 1px solid #111;
}
.below {
  display: flex;
  align-items: center;
  gap: 6px;
}
.density .below {
  gap: 8px;
  padding-top: 2px;
}
.below b,
.formula-line b {
  font-size: 16px;
  font-weight: 400;
}
.ve .below .inner {
  min-width: 47px;
  margin: 0 -6px;
}
.inner > :first-child {
  border-bottom: 1px solid #111;
}
.placeholder {
  position: absolute;
  top: 138px;
  left: 623px;
  width: 14px;
  height: 15px;
  border: 2px dotted #333;
}

/* text boxes */
.notes {
  position: absolute;
  margin: 0;
  padding: 3px 0;
  box-sizing: border-box;
  border: 1px solid #70ad47;
  background: #fff;
  color: #333;
  font-family: Lato, 'Open Sans', sans-serif;
  font-size: 11px;
  line-height: 15px;
  list-style: none;
  white-space: nowrap;
}
.notes li {
  position: relative;
  padding-left: 23px;
}
.notes li::before {
  content: '•';
  position: absolute;
  left: 7px;
}
.notes-ve {
  top: 48px;
  left: 780px;
  width: 368px;
}
.notes-density {
  top: 185px;
  left: 778px;
  width: 367px;
}
.convert {
  position: absolute;
  top: 306px;
  left: 442px;
  width: 338px;
  box-sizing: border-box;
  border: 1px solid #6a9bc0;
  background: #fff;
  color: #111;
}
.convert section {
  padding: 6px 8px 0;
}
.kelvin {
  height: 84px;
  border-bottom: 1px solid #6a9bc0;
}
.pascal {
  height: 78px;
}
.convert h2 {
  margin: 0;
  font-family: Lato, sans-serif;
  font-size: 20px;
  font-style: italic;
  font-weight: 700;
  line-height: 23px;
}
.formula-line {
  display: flex;
  align-items: center;
  gap: 6px;
  font-family: 'Liberation Serif', serif;
  font-size: 22px;
  line-height: 26px;
}
.kelvin .formula-line {
  height: 56px;
  padding-left: 28px;
}
.pascal .formula-line {
  padding-top: 25px;
}
.formula-line sub {
  font-size: 15px;
  line-height: 16px;
  vertical-align: -6px;
}
.nine {
  display: flex;
  align-items: center;
  margin-left: -3px;
}
.nine i {
  font-size: 46px;
  font-style: normal;
  line-height: 50px;
}
.nine .fraction {
  margin: 0 -1px;
}
.nine .fraction > :first-child {
  border-bottom: 1px solid #111;
}

/* scroll bars */
.vscroll {
  display: flex;
  flex-direction: column;
  width: 14px;
  padding: 3px 2px 0;
  box-sizing: border-box;
}
.vscroll button {
  height: 10px;
  background: #fff;
  border: 1px solid #c0c0c0;
}
.vscroll .thumb {
  height: 320px;
  margin: 1px 0 auto;
  background: #fff;
  border: 1px solid #c0c0c0;
}
.sheet-tabs {
  display: flex;
  align-items: center;
  height: 20px;
  padding-right: 14px;
}
.arrow {
  width: 19px;
  color: #aaa;
  font-size: 12px;
}
.arrow:first-child {
  margin-left: 10px;
}
.sheet-tab {
  align-self: flex-start;
  width: 43px;
  height: 17px;
  margin-left: 19px;
  background: #fff;
  border-bottom: 2px solid #5c9d79;
  box-sizing: border-box;
  color: #217346;
  font-weight: 700;
}
.add {
  margin-left: 22px;
}
.sheet-tabs .dots {
  margin-left: auto;
  color: #888;
}
.hscroll {
  display: flex;
  width: 38%;
  height: 10px;
  margin-left: 9px;
  background: #d6d6d6;
}
.hscroll button {
  width: 9px;
  background: #fff;
  border: 1px solid #b5b5b5;
}
.hscroll .thumb {
  flex: 1;
  margin-right: 21px;
  background: #fff;
  border: 1px solid #b5b5b5;
}
.status {
  display: flex;
  align-items: center;
  height: 13px;
  padding: 0 5px;
  background: #f1f1f1;
}
.status > svg {
  margin-left: 14px;
}
.views {
  display: grid;
  grid-template-columns: repeat(3, 25px);
  height: 13px;
  margin-left: auto;
}
.views .on {
  background: #cfcfcf;
}
.zoom {
  display: flex;
  align-items: center;
  gap: 2px;
}
.zoom button {
  width: 8px;
  font-size: 11px;
}
.zoom span {
  margin-left: 6px;
}
.zoom input {
  appearance: none;
  width: 67px;
  height: 9px;
  background: linear-gradient(#aaa, #aaa) center / 100% 1px no-repeat;
}
.zoom input::-webkit-slider-thumb {
  appearance: none;
  width: 3px;
  height: 8px;
  background: #666;
}

/* windows taskbar */
.taskbar {
  display: flex;
  justify-content: space-between;
  height: 27px;
  background: #0b0d0d;
  color: #fff;
}
.apps {
  display: flex;
  width: 490px;
}
.apps button {
  position: relative;
  flex: 1;
}
.running::after {
  content: '';
  position: absolute;
  right: 3px;
  bottom: 0;
  left: 3px;
  height: 2px;
  background: #b4e07c;
}
.current {
  background: #3c3f3f;
}
.current::after {
  right: 0;
  left: 0;
}
.tray {
  display: flex;
  align-items: center;
  gap: 5px;
  padding-right: 7px;
}
.tray time {
  padding-left: 1px;
  text-align: center;
}

/* borders drop-down */
.menu {
  position: absolute;
  top: 82px;
  left: 166px;
  width: 149px;
  padding: 0 1px 1px;
  box-sizing: border-box;
  border: 1px solid #c6c6c6;
  background: #fff;
  box-shadow: 1px 1px 2px rgba(0, 0, 0, 0.2);
  color: #666;
}
.menu h3 {
  margin: 0;
  padding-left: 4px;
  background: #eee;
  font-size: 8px;
  font-weight: 700;
  line-height: 15px;
}
.menu button + h3 {
  line-height: 16px;
}
.menu hr {
  height: 1px;
  margin: 0 0 0 20px;
  border: 0;
  background: #e0e0e0;
}
.menu button {
  justify-content: flex-start;
  width: 100%;
  height: 16px;
}
.menu .menu-icon {
  display: flex;
  width: 18px;
  padding-left: 2px;
}
.menu button .caret {
  margin: 0 6px 0 auto;
  border-width: 2px;
  border-right-width: 0;
}
.menu .hover {
  background: #c5c5c5;
  color: #444;
}
.pointer {
  position: absolute;
  top: 180px;
  left: 152px;
  pointer-events: none;
}
</style>
